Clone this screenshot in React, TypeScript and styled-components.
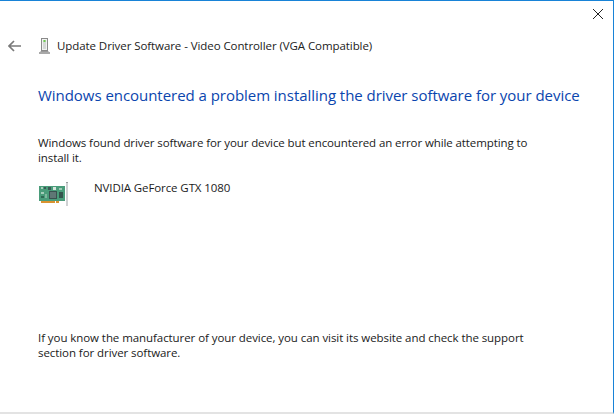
import React from "react";
import styled, { createGlobalStyle } from "styled-components";

const Global = createGlobalStyle`
  html, body { margin: 0; padding: 0; background: #fff; }
  body { font-family: "Open Sans", "Noto Sans", "Liberation Sans", sans-serif; }
`;

const Dialog = styled.div`
  box-sizing: border-box;
  width: 614px;
  height: 414px;
  background: #fff;
  display: flex;
  flex-direction: column;
  border-top: 1px solid #1883d7;
  border-right: 1px solid #1883d7;
  border-bottom: 2px solid #e3e3e3;
  color: #1a1a1a;
  overflow: hidden;
`;

const TitleBar = styled.div`
  height: 21px;
  display: flex;
  justify-content: flex-end;
  align-items: flex-start;
  padding: 8px 10px 0 0;
  flex: none;
`;

const CloseButton = styled.button`
  width: 10px;
  height: 10px;
  padding: 0;
  border: 0;
  background: none;
  display: block;
  svg { display: block; }
`;

const Header = styled.div`
  display: flex;
  align-items: center;
  height: 32px;
  padding-left: 8px;
  flex: none;
`;

const BackIcon = styled.svg`
  width: 13px;
  height: 12px;
  flex: none;
  margin-right: 17px;
`;

const DeviceSmall = styled.svg`
  width: 14px;
  height: 16px;
  flex: none;
  margin-right: 5px;
`;

const HeaderTitle = styled.span`
  font-size: 11.5px;
  line-height: 16px;
  letter-spacing: -0.075px;
  white-space: nowrap;
  color: #222;
`;

const Content = styled.div`
  flex: 1;
  display: flex;
  flex-direction: column;
  padding: 0 30px 0 38px;
`;

const Heading = styled.h1`
  margin: 23px 0 0;
  font-size: 15px;
  line-height: 20px;
  font-weight: 400;
  letter-spacing: -0.04px;
  color: #0a45ae;
  white-space: nowrap;
`;

const Paragraph = styled.p`
  margin: 0;
  font-size: 11.5px;
  line-height: 15px;
  letter-spacing: -0.1px;
  width: 500px;
  color: #1a1a1a;
`;

const Message = styled(Paragraph)`
  margin-top: 30px;
`;

const DeviceRow = styled.div`
  display: flex;
  align-items: flex-start;
  margin-top: 15px;
`;

const CardIcon = styled.svg`
  width: 30px;
  height: 25px;
  flex: none;
  margin-right: 26px;
  margin-top: 2px;
`;

const DeviceName = styled.span`
  font-size: 11.5px;
  line-height: 15px;
  letter-spacing: -0.1px;
  color: #1a1a1a;
`;

const Help = styled(Paragraph)`
  margin-top: auto;
  margin-bottom: 52px;
  letter-spacing: -0.07px;
  line-height: 14.5px;
`;

const CircuitCard = () => (
  <CardIcon viewBox="0 0 30 25">
    <rect x="1" y="4" width="26" height="15" fill="#4a9c7a" />
    <rect x="3" y="19" width="14" height="2" fill="#d9932f" />
    <rect x="18" y="19" width="3" height="2" fill="#d9932f" />
    <rect x="11" y="9" width="8" height="8" fill="#3a5250" />
    <rect x="12" y="10" width="6" height="6" fill="#5f7775" />
    <rect x="21" y="10" width="4" height="6" fill="#33544c" />
    <rect x="3" y="5" width="2" height="2" fill="#a9d0bd" />
    <rect x="6" y="5" width="2" height="2" fill="#3b5a55" />
    <rect x="10" y="5" width="3" height="3" fill="#3b5a55" />
    <rect x="15" y="5" width="3" height="3" fill="#d5e5dc" />
    <rect x="3" y="10" width="3" height="2" fill="#a5cdb9" />
    <rect x="3" y="14" width="3" height="2" fill="#2f6a54" />
    <rect x="7" y="12" width="2" height="4" fill="#7fb89e" />
    <rect x="21" y="6" width="3" height="2" fill="#9fcab5" />
    <rect x="28" y="0" width="2" height="24" fill="#cfd1d3" />
    <rect x="28" y="0" width="2" height="1" fill="#9a9c9e" />
  </CardIcon>
);

export default function App() {
  return (
    <>
      <Global />
      <Dialog>
        <TitleBar>
          <CloseButton aria-label="Close">
            <svg width="10" height="10" viewBox="0 0 10 10">
              <path d="M0 0L10 10M10 0L0 10" stroke="#222" strokeWidth="1" />
            </svg>
          </CloseButton>
        </TitleBar>
        <Header>
          <BackIcon viewBox="0 0 13 12">
            <path d="M6 1L1 6L6 11M1 6H13" fill="none" stroke="#7a7a7a" strokeWidth="1.7" />
          </BackIcon>
          <DeviceSmall viewBox="0 0 14 16">
            <rect x="3.5" y="0.5" width="6" height="12" fill="#f2f3f2" stroke="#8a8a8a" />
            <rect x="5" y="2" width="3" height="9" fill="#d5d8d6" />
            <rect x="5.5" y="2" width="2" height="2" fill="#6ecb4f" />
            <rect x="2.5" y="13" width="8" height="1" fill="#9a9a9a" />
            <rect x="1" y="14.5" width="11" height="1" fill="#555" />
          </DeviceSmall>
          <HeaderTitle>Update Driver Software - Video Controller (VGA Compatible)</HeaderTitle>
        </Header>
        <Content>
          <Heading>Windows encountered a problem installing the driver software for your device</Heading>
          <Message>
            Windows found driver software for your device but encountered an error while attempting to install it.
          </Message>
          <DeviceRow>
            <CircuitCard />
            <DeviceName>NVIDIA GeForce GTX 1080</DeviceName>
          </DeviceRow>
          <Help>
            If you know the manufacturer of your device, you can visit its website and check the support section for driver software.
          </Help>
        </Content>
      </Dialog>
    </>
  );
}
